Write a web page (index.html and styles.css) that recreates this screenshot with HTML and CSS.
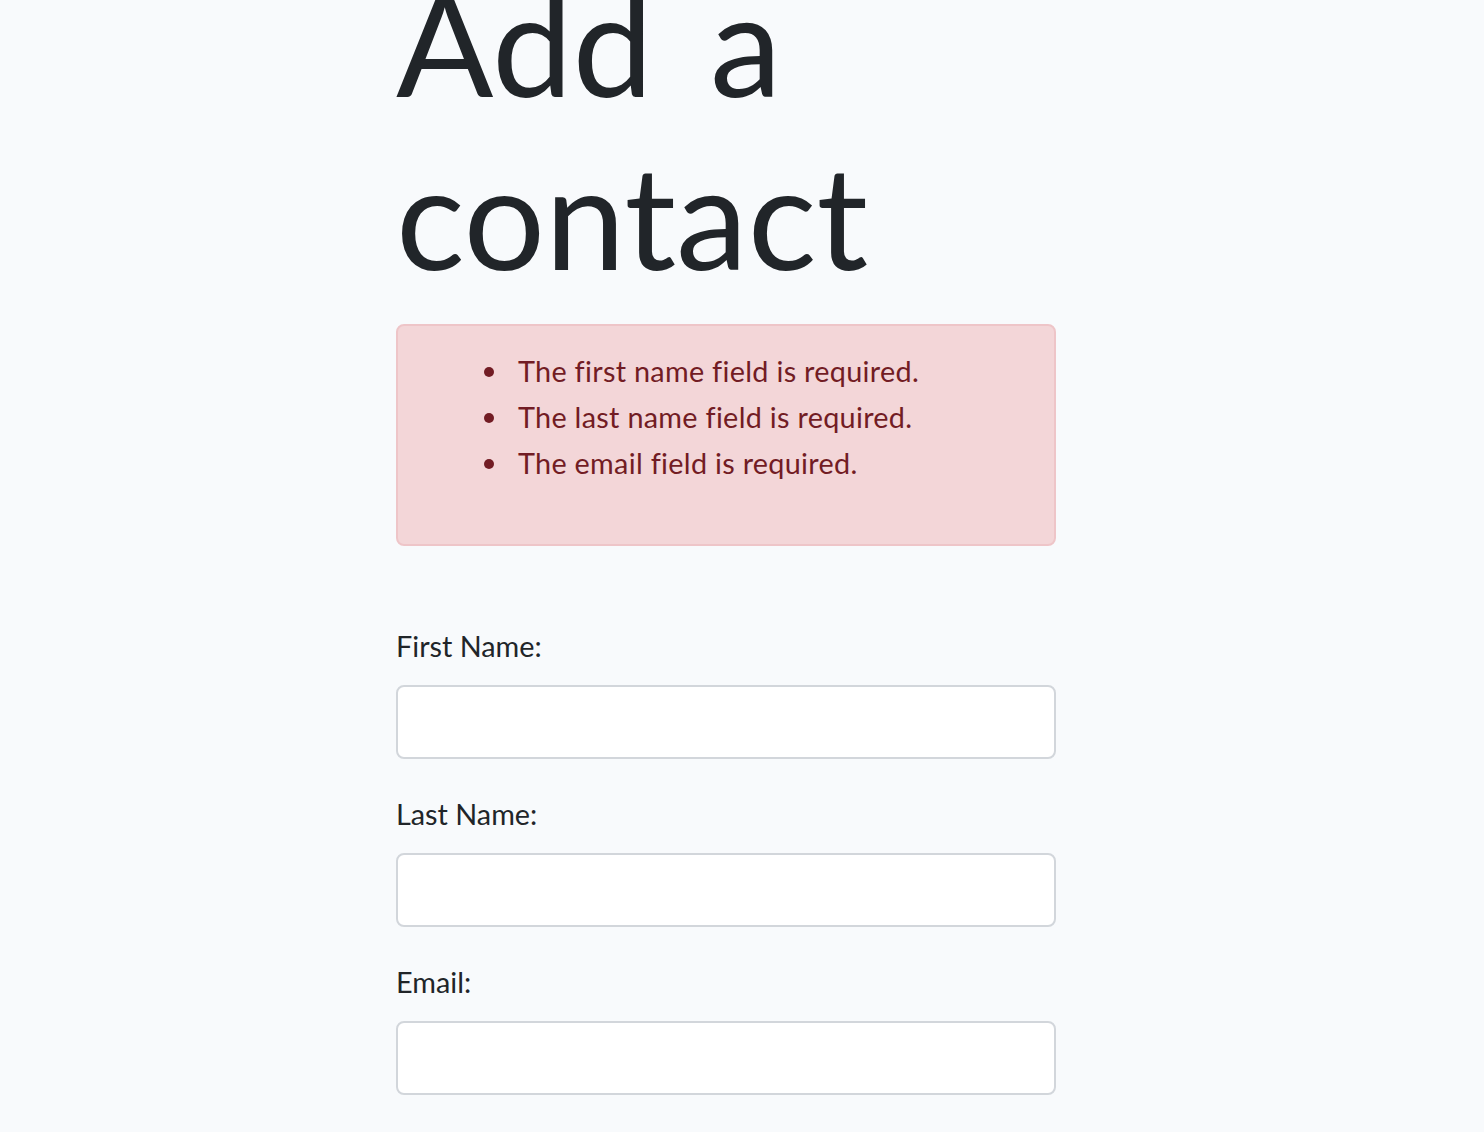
FILE: index.html
```html
<!DOCTYPE html>
<html lang="en">
<head>
<meta charset="utf-8">
<title>Add a contact</title>
<link rel="stylesheet" href="styles.css">
</head>
<body>
<main class="page">
  <h1 class="title">Add a contact</h1>
  <div class="alert">
    <ul class="errors">
      <li class="error">The first name field is required.</li>
      <li class="error">The last name field is required.</li>
      <li class="error">The email field is required.</li>
    </ul>
  </div>
  <form class="form">
    <div class="group">
      <label class="label" for="first_name">First Name:</label>
      <input class="input" type="text" id="first_name" name="first_name">
    </div>
    <div class="group">
      <label class="label" for="last_name">Last Name:</label>
      <input class="input" type="text" id="last_name" name="last_name">
    </div>
    <div class="group">
      <label class="label" for="email">Email:</label>
      <input class="input" type="text" id="email" name="email">
    </div>
  </form>
</main>
</body>
</html>
```
FILE: styles.css
```css
html, body {
  margin: 0;
  padding: 0;
}
body {
  background: #f8fafc;
  color: #212529;
  font-family: "Lato", "Noto Sans", sans-serif;
  font-size: 28.8px;
  line-height: 46px;
  overflow: hidden;
}
.page {
  width: 660px;
  margin-left: 396px;
}
.title {
  font-size: 144px;
  font-weight: 400;
  line-height: 172.8px;
  margin: -44px 0 22px 0;
  word-spacing: 20px;
}
.alert {
  background: #f3d6d8;
  border: 2px solid #eec5c8;
  border-radius: 8px;
  color: #721c24;
  padding: 22px 40px 26px 40px;
  margin-bottom: 77px;
}
.errors {
  margin: 0 0 32px 0;
  padding-left: 80px;
  list-style: none;
}
.error {
  position: relative;
  letter-spacing: 0.3px;
}
.error::before {
  content: "";
  position: absolute;
  left: -34px;
  top: 19px;
  width: 10px;
  height: 10px;
  border-radius: 50%;
  background: currentColor;
}
.form {
  display: block;
}
.group {
  margin-bottom: 32px;
}
.label {
  display: block;
  margin-bottom: 16px;
}
.input {
  display: block;
  box-sizing: border-box;
  width: 100%;
  height: 74px;
  border: 2px solid #d2d6db;
  border-radius: 8px;
  background: #fff;
  padding: 12px 24px;
  font: inherit;
  margin: 0;
}
```
